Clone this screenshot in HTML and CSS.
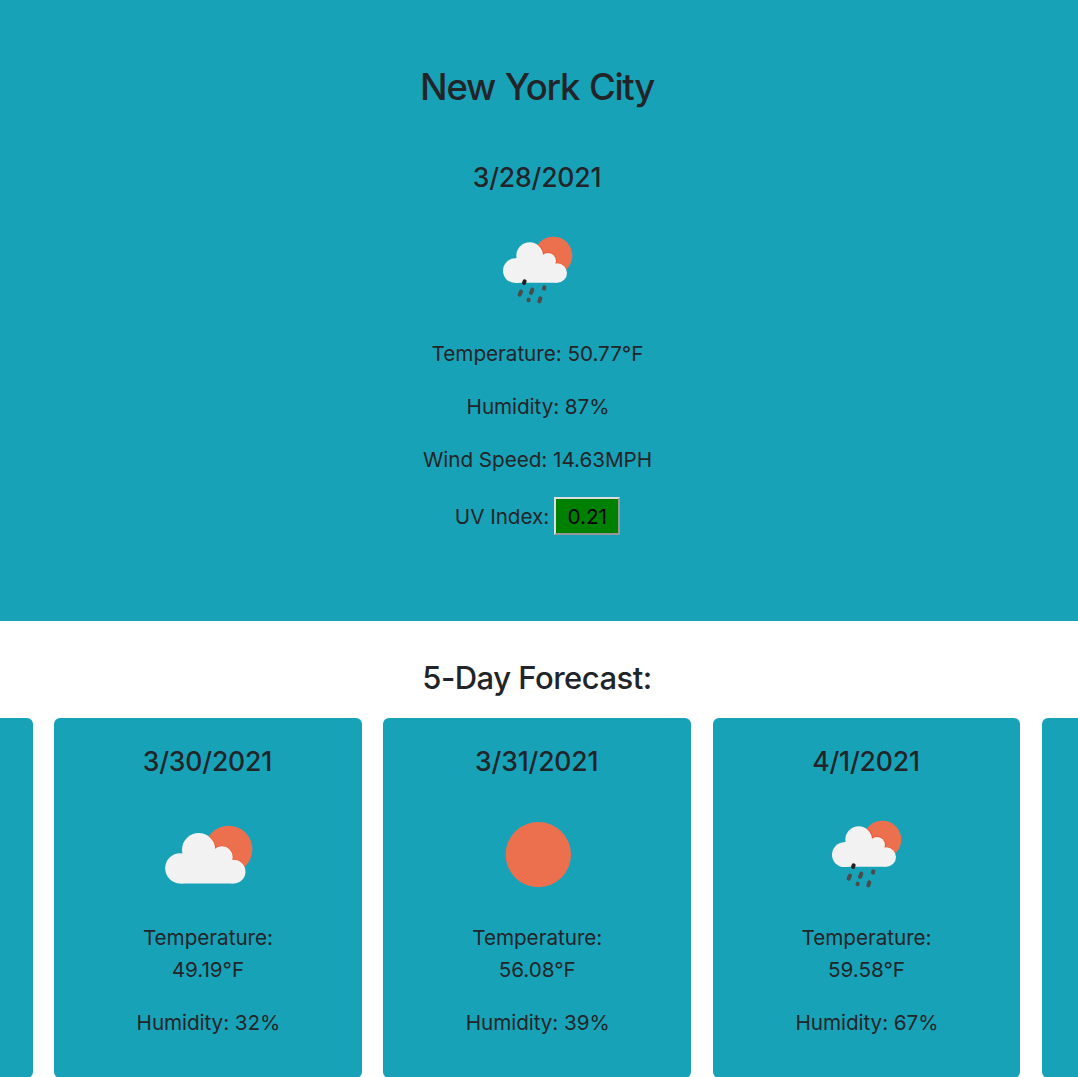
FILE: index.html
```html
<!DOCTYPE html>
<html lang="en">
<head>
<meta charset="utf-8">
<title>Weather Dashboard</title>
<link rel="stylesheet" href="styles.css">
</head>
<body>
<svg class="symbols" aria-hidden="true">
  <clipPath id="rain-sun"><circle cx="189" cy="92" r="57"/></clipPath>
  <clipPath id="clouds-sun"><circle cx="221" cy="118" r="71"/></clipPath>
  <symbol id="rain" viewBox="0 0 133 133">
    <g transform="translate(19 21) scale(.3333)">
      <circle class="sun" cx="190" cy="92" r="57"/>
      <g class="edge" clip-path="url(#rain-sun)"><circle cx="119" cy="92" r="43"/><circle cx="174" cy="108" r="27"/><circle cx="202" cy="144" r="31"/></g>
      <g class="cloud"><circle cx="76" cy="137" r="37"/><circle cx="119" cy="92" r="40"/><circle cx="174" cy="108" r="24"/><circle cx="202" cy="144" r="29"/><path d="M76 100H190L202 173H76z"/></g>
      <g class="drops"><path d="M93 200l-4 9M127 194l-4 10M163 187l-1 4M116 224l-.5 2M151 220l-3 9"/><path class="drop-dark" d="M104 169l-2 5"/></g>
    </g>
  </symbol>
  <symbol id="clouds" viewBox="0 0 133 133">
    <g transform="translate(14 22) scale(.3333)">
      <circle class="sun" cx="221" cy="118" r="71"/>
      <g class="edge" clip-path="url(#clouds-sun)"><circle cx="131" cy="119" r="52"/><circle cx="201" cy="141" r="34"/><circle cx="236" cy="185" r="37"/></g>
      <g class="cloud"><circle cx="76" cy="175" r="45.500"/><circle cx="131" cy="119" r="50"/><circle cx="201" cy="141" r="32"/><circle cx="236" cy="185" r="35.500"/><path d="M76 135H215L236 220.500H76z"/></g>
    </g>
  </symbol>
  <symbol id="clear" viewBox="0 0 133 133">
    <circle class="sun" cx="67.300" cy="66.600" r="32.700"/>
  </symbol>
</svg>
<main>
  <section class="current">
    <h1 class="city">New York City</h1>
    <h3 class="date">3/28/2021</h3>
    <svg class="icon"><use href="#rain"/></svg>
    <p class="temp">Temperature: 50.77°F</p>
    <p class="humidity">Humidity: 87%</p>
    <p class="wind">Wind Speed: 14.63MPH</p>
    <p class="uv"><span class="uv-label">UV Index:</span> <button class="uv-value">0.21</button></p>
  </section>
  <section class="forecast">
    <h2 class="forecast-title">5-Day Forecast:</h2>
    <div class="cards">
      <article class="card"></article>
      <article class="card">
        <h3 class="date">3/30/2021</h3>
        <svg class="icon"><use href="#clouds"/></svg>
        <p>Temperature:<br>49.19°F</p>
        <p class="humidity">Humidity: 32%</p>
      </article>
      <article class="card">
        <h3 class="date">3/31/2021</h3>
        <svg class="icon"><use href="#clear"/></svg>
        <p>Temperature:<br>56.08°F</p>
        <p class="humidity">Humidity: 39%</p>
      </article>
      <article class="card">
        <h3 class="date">4/1/2021</h3>
        <svg class="icon"><use href="#rain"/></svg>
        <p>Temperature:<br>59.58°F</p>
        <p class="humidity">Humidity: 67%</p>
      </article>
      <article class="card"></article>
    </div>
  </section>
</main>
</body>
</html>
```
FILE: styles.css
```css
* { box-sizing: border-box; }
html, body { height: 100%; }
body {
  margin: 0;
  overflow: hidden;
  background: #fff;
  color: #212529;
  font-family: Inter, "Liberation Sans", sans-serif;
  font-size: 20.7px;
  line-height: 32px;
  text-align: center;
}
h1, h2, h3, p { margin: 0; font-weight: 400; white-space: nowrap; }
.symbols { display: block; width: 0; height: 0; }
.current {
  display: flex;
  flex-direction: column;
  align-items: center;
  height: 621px;
  padding: 64px 3px 0 0;
  background: #18a2b8;
}
.city { font-size: 36.500px; line-height: 46px; font-weight: 550; letter-spacing: -1.3px; word-spacing: 1.5px; padding-right: 1px; }
.date { font-size: 26.500px; line-height: 32px; font-weight: 550; letter-spacing: -.15px; padding-right: 1px; }
.current .date { margin-top: 51px; }
.icon { display: block; width: 133px; height: 133px; margin: 11px 0 1px; }
p { margin-bottom: 21px; letter-spacing: -.04px; }
.humidity { padding-left: 1px; letter-spacing: -.08px; }
.current p:last-child { margin: 0; }
.uv { display: flex; align-items: center; gap: 5px; height: 38px; }
.uv-label { padding-top: 2px; }
.uv-value {
  width: 66px;
  height: 38px;
  padding: 0;
  border: 2px solid;
  border-color: #dedede #969696 #969696 #dedede;
  border-radius: 0;
  background: #008000;
  color: #000;
  font: inherit;
  line-height: 35px;
}
.forecast { padding: 36px 3px 0 0; overflow: hidden; }
.forecast-title { font-size: 31px; line-height: 42px; font-weight: 550; letter-spacing: -.5px; margin-bottom: 19px; padding-right: 1px; }
.cards {
  display: grid;
  grid-template-columns: repeat(5, 307.900px);
  gap: 21.400px;
  justify-content: center;
  margin-right: .6px;
}
.card {
  display: flex;
  flex-direction: column;
  align-items: center;
  height: 360px;
  padding-top: 27px;
  border-radius: 6px;
  background: #18a2b8;
}
.sun { fill: #ed704e; }
.edge { fill: #ed5434; }
.cloud { fill: #f2f2f2; }
.drops { fill: none; stroke: #4b4b4d; stroke-width: 12; stroke-linecap: round; }
.drop-dark { stroke: #202020; }
```
